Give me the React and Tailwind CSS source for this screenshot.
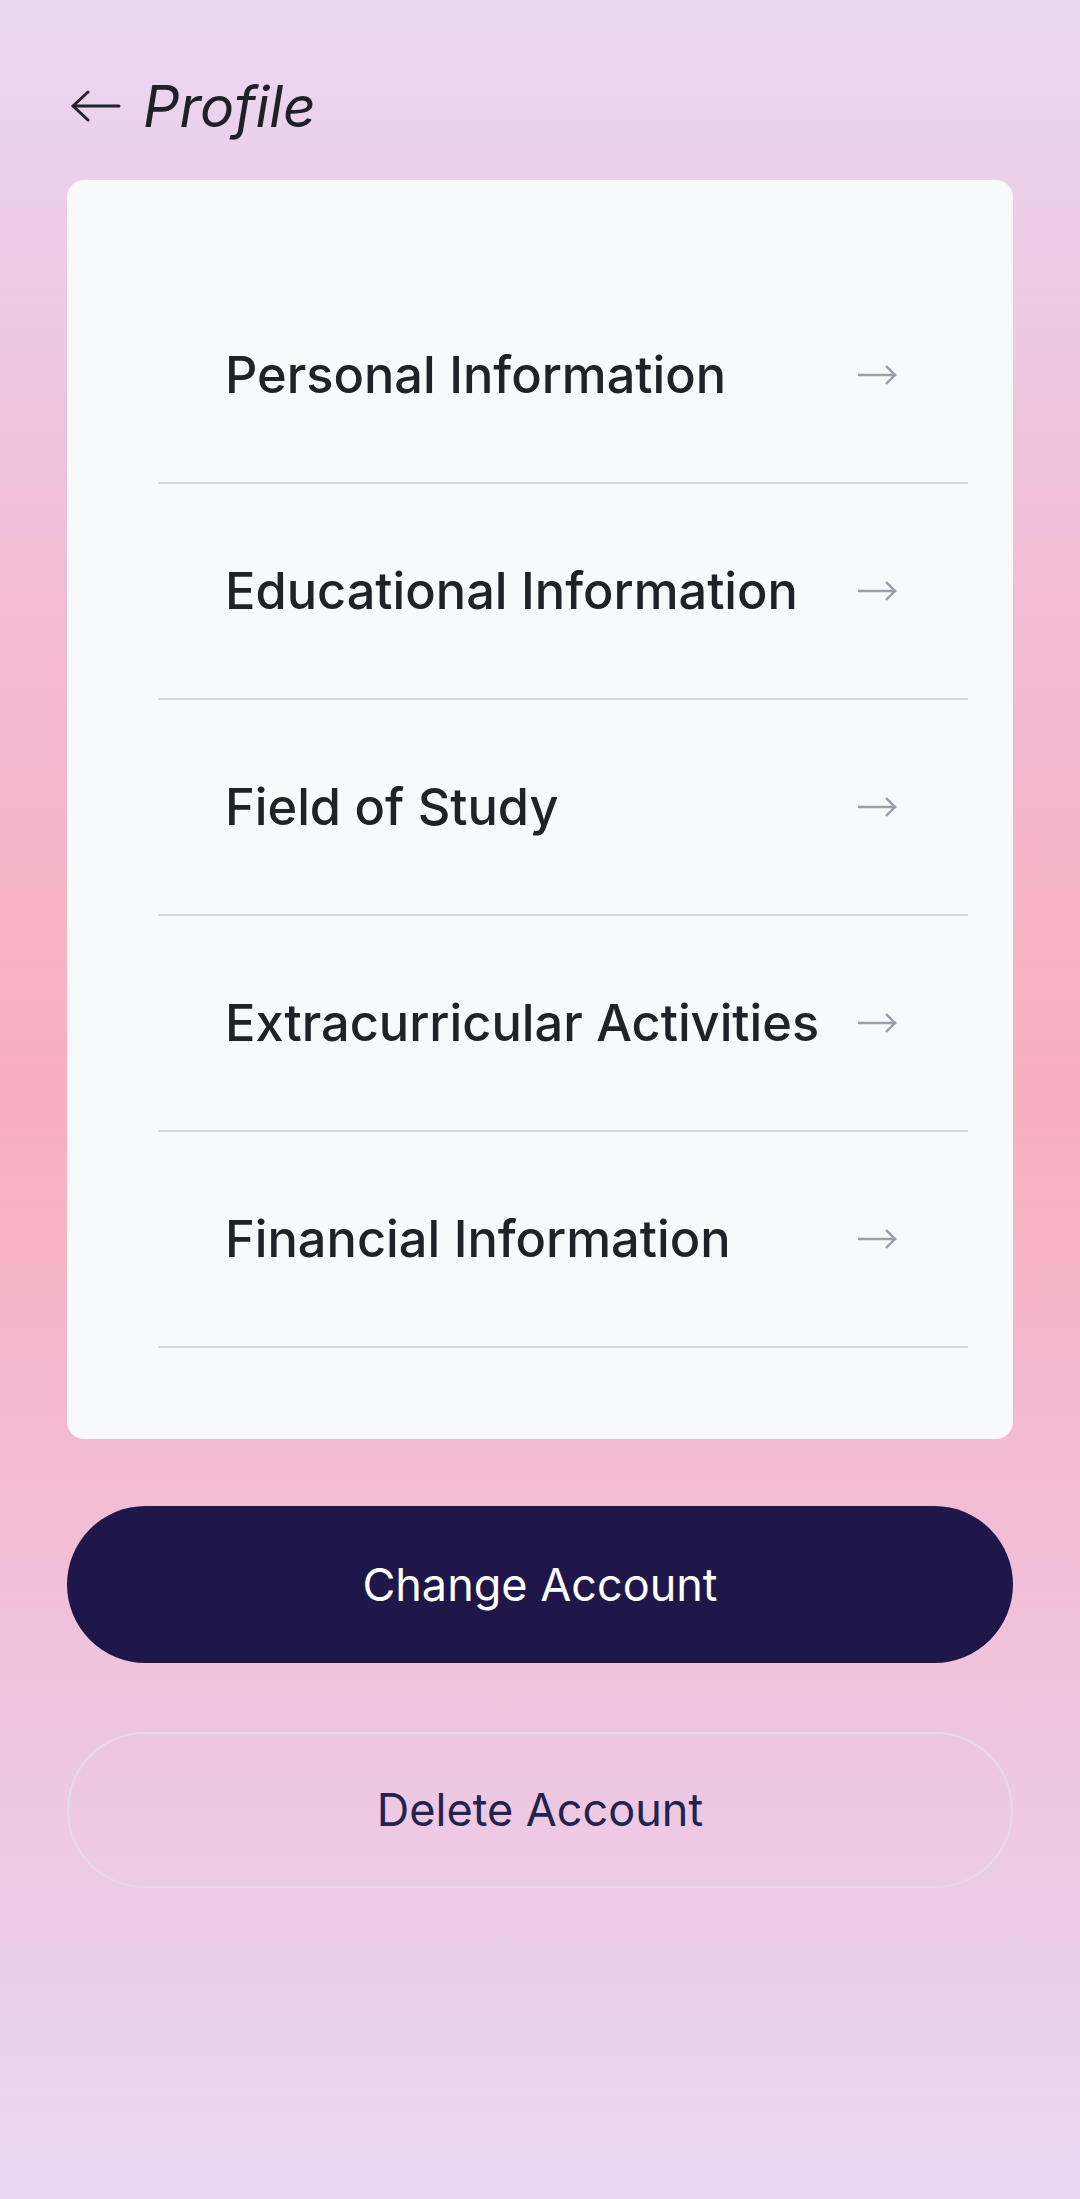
import React from "react";

const items = [
  "Personal Information",
  "Educational Information",
  "Field of Study",
  "Extracurricular Activities",
  "Financial Information",
];

function BackArrow() {
  return (
    <svg width="50" height="32" viewBox="0 0 50 32" fill="none" stroke="#222328" strokeWidth="3" strokeLinecap="round" strokeLinejoin="round">
      <path d="M2 16H48" />
      <path d="M17 2L2 16L17 30" />
    </svg>
  );
}

function RowArrow() {
  return (
    <svg width="40" height="20" viewBox="0 0 40 20" fill="none" stroke="#9ca0ab" strokeWidth="2.5" strokeLinecap="square">
      <path d="M1 10H37" />
      <path d="M29 2L37 10L29 18" />
    </svg>
  );
}

export default function App() {
  return (
    <div
      className="min-h-screen w-full px-[67px] pb-[300px] bg-[linear-gradient(180deg,#e9d8f3_0%,#f2bcd4_27%,#f8afc0_50%,#f2bcd4_68%,#e8d8f4_100%)]"
      style={{ fontFamily: "Inter, 'Noto Sans', sans-serif" }}
    >
      {/* header */}
      <div className="pt-[72px] h-[139px] flex items-start">
        <div className="h-[68px] flex items-center gap-[22px] pl-[4px]">
          <BackArrow />
          <h1 className="text-[57px] italic font-normal text-[#202126] leading-none">Profile</h1>
        </div>
      </div>

      {/* list card */}
      <div className="mt-[41px] rounded-[17px] bg-[#f8f9fb] pt-[88px] pb-[91px]">
        <div className="ml-[91px] mr-[45px]">
          {items.map((label) => (
            <div
              key={label}
              className="h-[216px] border-b-2 border-[#d5d5dc] flex items-center justify-between pl-[67px] pr-[70px]"
            >
              <span className="text-[50.5px] font-medium text-[#212228] leading-none">{label}</span>
              <RowArrow />
            </div>
          ))}
        </div>
      </div>

      {/* actions */}
      <button className="mt-[67px] w-full h-[157px] rounded-full bg-[#1f1749] text-white text-[45px] font-normal flex items-center justify-center">
        Change Account
      </button>
      <button className="mt-[69px] w-full h-[156px] rounded-full border-2 border-[#e4dbe9] text-[#22234f] text-[45px] font-normal flex items-center justify-center">
        Delete Account
      </button>
    </div>
  );
}
